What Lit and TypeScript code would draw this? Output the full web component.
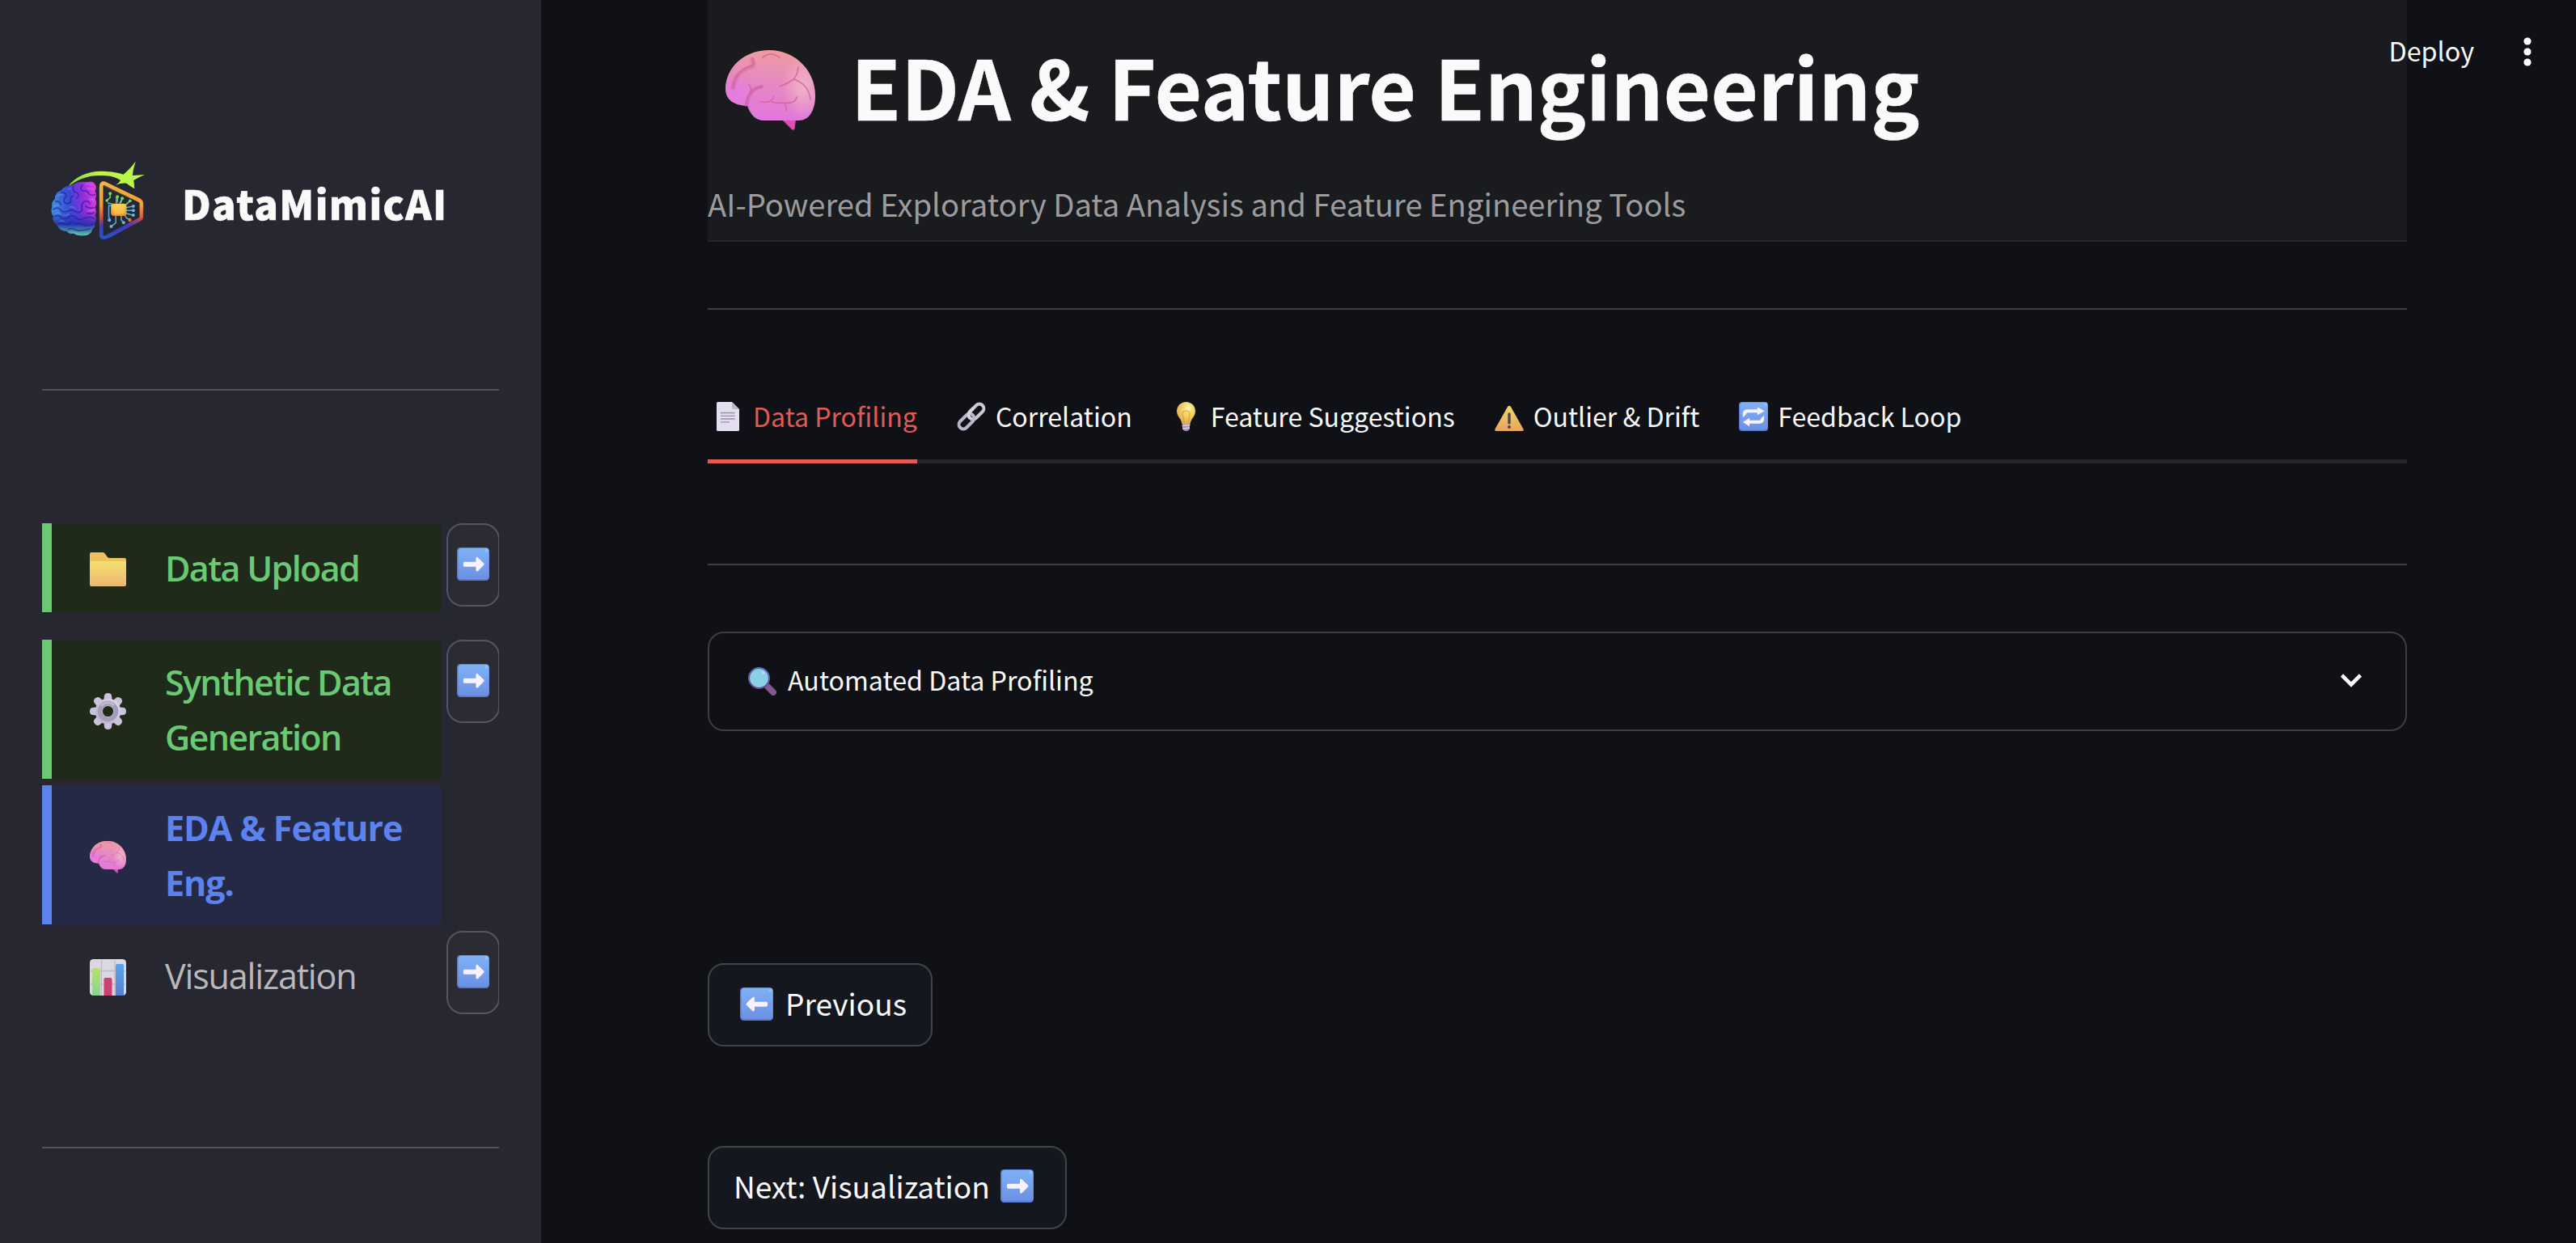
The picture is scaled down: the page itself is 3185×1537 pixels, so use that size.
import { LitElement, html, svg, css, nothing, TemplateResult } from "lit";
import { customElement, property } from "lit/decorators.js";
import { classMap } from "lit/directives/class-map.js";

/* ---------- glyph drawings ---------- */

const folder = svg`<svg viewBox="0 0 45 42" width="45" height="42">
  <defs><linearGradient id="f" x1="0" y1="0" x2="0" y2="1"><stop offset="0" stop-color="#f5e16e"/><stop offset="1" stop-color="#ebb573"/></linearGradient></defs>
  <path d="M0 2Q0 0 2 0H16Q18 0 19 2L22 6Q23 7 25 7H43Q45 7 45 9V16H0Z" fill="#edc15c"/>
  <path d="M0 13Q0 11 2 11H43Q45 11 45 13V40Q45 42 43 42H2Q0 42 0 40Z" fill="url(#f)"/></svg>`;

const gearTeeth = [0, 45, 90, 135, 180, 225, 270, 315];
const gear = svg`<svg viewBox="0 0 45 45" width="45" height="45">
  <defs><linearGradient id="g" x1="1" y1="0" x2="0" y2="1"><stop offset="0" stop-color="#dfdbe8"/><stop offset="1" stop-color="#b9acd0"/></linearGradient></defs>
  <mask id="gm"><rect width="45" height="45" fill="#fff"/><circle cx="22.5" cy="22.5" r="6.6" fill="#000"/></mask>
  <g fill="url(#g)" mask="url(#gm)">
    ${gearTeeth.map((a) => svg`<path transform=${`rotate(${a} 22.5 22.5)`} d="M17 12L18 3Q18.600 0 22.5 0T27 3L28 12Z" fill="#cbc3dc"/>`)}
    <circle cx="22.5" cy="22.5" r="15.8"/>
    <circle cx="22.5" cy="22.5" r="10" fill="none" stroke="#a49db3" stroke-width="5.5"/>
    <path d="M14 16a11 11 0 0 1 16-1" fill="none" stroke="#c3bccd" stroke-width="2.5"/>
  </g></svg>`;

const brain = (w: number, h: number) => svg`<svg viewBox="0 0 111 100" width=${w} height=${h}>
  <defs>
    <linearGradient id="b" x1=".55" y1="0" x2=".42" y2="1"><stop offset="0" stop-color="#ee9d9f"/><stop offset=".42" stop-color="#e68bc0"/><stop offset="1" stop-color="#e175e0"/></linearGradient>
    <radialGradient id="bh" cx=".5" cy=".5" r=".5"><stop offset="0" stop-color="#f0b3c8"/><stop offset="1" stop-color="#f0b3c8" stop-opacity="0"/></radialGradient>
    <radialGradient id="bl" cx=".5" cy=".5" r=".5"><stop offset="0" stop-color="#e57be6"/><stop offset="1" stop-color="#e57be6" stop-opacity="0"/></radialGradient>
    <clipPath id="bc"><path d="M0 48C1 22 23 1 54 1C88 1 111 28 111 57C111 76 103 88 91 88H48C36 88 31 80 27 70C12 69 0 64 0 48Z"/></clipPath>
  </defs>
  <path d="M69 86H87L85.500 98Q84.500 101 82 99Z" fill="#e04db6"/>
  <g clip-path="url(#bc)">
    <rect width="111" height="90" fill="url(#b)"/>
    <ellipse cx="96" cy="46" rx="26" ry="40" fill="url(#bh)"/>
    <ellipse cx="14" cy="52" rx="22" ry="22" fill="url(#bl)"/>
    <path d="M32 11Q38 19 31 22C18 26 10 36 9 50" fill="none" stroke="#c2578f" stroke-opacity=".3" stroke-width="6"/>
    <path d="M46 46C33 47 27 58 26 72" fill="none" stroke="#b24fae" stroke-opacity=".35" stroke-width="5"/>
  </g>
  <g fill="none" stroke="#da6295" stroke-width="1.7" stroke-opacity=".85" stroke-linecap="round">
    <path d="M46 10Q56 2 67 10"/><path d="M33 11Q37 19 31 21C17 25 10 36 9 49"/>
    <path d="M90 22Q89 32 84 37Q76 43 67 46M84 37Q103 43 105 62"/>
    <path d="M29 44Q33 48 30 54M46 46C33 47 26 58 25 70"/>
    <path d="M44 65Q57 67 60 58M57 65Q64 67 72 66Q86 68 88 59M72 66Q76 70 75 76"/>
  </g></svg>`;

const chart = svg`<svg viewBox="0 0 45 45" width="45" height="45">
  <defs>
    <linearGradient id="cg" x1="0" y1="0" x2="0" y2="1"><stop offset="0" stop-color="#b7e069"/><stop offset="1" stop-color="#86d691"/></linearGradient>
    <linearGradient id="cb" x1="0" y1="0" x2="0" y2="1"><stop offset="0" stop-color="#5aa5ef"/><stop offset="1" stop-color="#577fce"/></linearGradient>
  </defs>
  <rect width="45" height="45" rx="4.500" fill="#dcd8e3"/>
  <path d="M14.500 1V44M31 1V44M1 14.500H44M1 31H44" stroke="#bdb8c8" stroke-width="1.300"/>
  <path d="M3 45V13Q3 11 5 11H11Q13 11 13 13V45Z" fill="url(#cg)"/>
  <path d="M17.500 45V25Q17.500 23 19.500 23H25.500Q27.500 23 27.500 25V45Z" fill="#cd3f70"/>
  <path d="M32 45V8Q32 6 34 6H40Q42 6 42 8V45Z" fill="url(#cb)"/></svg>`;

const keycap = (id: string, body: TemplateResult) => svg`
  <defs><linearGradient id=${id} x1="0" y1="0" x2="0" y2="1"><stop offset="0" stop-color="#7fb2f6"/><stop offset="1" stop-color="#6c90e3"/></linearGradient></defs>
  <rect width="41" height="41" rx="4.500" fill="#5b78d3"/>
  <rect x="1.500" y=".7" width="39" height="38.600" rx="4" fill=${`url(#${id})`}/>
  <circle cx="37.500" cy="3.500" r="2.200" fill="#8fc6fb" opacity=".8"/>
  <g fill="#f9f2fd">${body}</g>`;

const arrow = (dir: "left" | "right", w = 41) => svg`<svg viewBox="0 0 41 41" width=${w} height="41" preserveAspectRatio="none">
  ${keycap("k", svg`<path transform=${dir === "left" ? "translate(42 0) scale(-1 1)" : ""}
    d="M9.500 17.700H24V13Q24.500 11 26.500 12.200L34 19.600Q35 20.700 34 21.800L26.500 29.200Q24.500 30.300 24 28.300V23.700H9.500Q8 23.700 8 22V19.400Q8 17.700 9.500 17.700Z"/>`)}</svg>`;

const doc = svg`<svg viewBox="0 0 36 36" width="36" height="36">
  <path d="M4.500 0H22L31 9V34.500Q31 36 29.500 36H4.500Q3 36 3 34.500V1.500Q3 0 4.500 0Z" fill="#e4dff0"/>
  <path d="M22 0L31 9H23.500Q22 9 22 7.500Z" fill="#bdb7ca"/>
  <path d="M8 13.500H25.500M8 17.300H25.500M8 21H25.500M8 24.800H19" stroke="#96909f" stroke-width="1.300"/></svg>`;

const link = svg`<svg viewBox="0 0 36 36" width="36" height="36" fill="none">
  <g transform="rotate(45 18 18)">
    <rect x="12.500" y="-1.500" width="11" height="22" rx="5.500" stroke="#cdc6d6" stroke-width="4"/>
    <rect x="12.500" y="15.500" width="11" height="22" rx="5.500" stroke="#bdb4c9" stroke-width="4"/>
    <path d="M12.500 9V15A5.500 5.500 0 0 0 18 20.500" stroke="#d9d3e0" stroke-width="4"/>
  </g></svg>`;

const bulb = svg`<svg viewBox="0 0 36 36" width="36" height="36">
  <defs><radialGradient id="l" cx=".62" cy=".28" r=".7"><stop offset="0" stop-color="#fff6c4"/><stop offset=".35" stop-color="#f6dc6c"/><stop offset="1" stop-color="#e9ab4e"/></radialGradient></defs>
  <path d="M13 26H22V33Q21 36 17.500 36T13 33Z" fill="#a492b8"/>
  <path d="M12.500 29.500L22.500 28.500M13 33L22 32" stroke="#d9cfe2" stroke-width="1.300"/>
  <path d="M17.500 0C24 0 29 5 29 11.500C29 18 23.500 20 22.500 27.500H12.500C11.500 20 6 18 6 11.500C6 5 11 0 17.500 0Z" fill="url(#l)"/>
  <path d="M15.500 27L13 15Q13 11 17.500 11T22 15L19.500 27" fill="none" stroke="#dfa040" stroke-width="1.200"/></svg>`;

const warning = svg`<svg viewBox="0 0 36 36" width="36" height="36">
  <defs><linearGradient id="w" x1="0" y1="0" x2="0" y2="1"><stop offset="0" stop-color="#f1d66c"/><stop offset="1" stop-color="#e9a45f"/></linearGradient></defs>
  <path d="M16 6Q18 3.500 20 6L35.500 33.500Q36.500 36 34 36H2Q-.5 36 .5 33.500Z" fill="url(#w)"/>
  <path d="M18 15V26" stroke="#4d4652" stroke-width="3.400" stroke-linecap="round"/><circle cx="18" cy="31" r="2" fill="#4d4652"/></svg>`;

const loop = svg`<svg viewBox="0 0 41 41" width="36" height="36">
  ${keycap("o", svg`<path d="M5.500 22V17Q5.500 10.500 12 10.500H26V7L36 12.800L26 18.500V15H12.500Q10 15 10 18Z"/><path d="M35.500 19V24Q35.500 30.500 29 30.500H15V34.500L5.500 28.500L15 22.500V26H28.500Q31 26 31 23Z"/>`)}</svg>`;

const magnifier = svg`<svg viewBox="0 0 35 35" width="35" height="35">
  <defs><linearGradient id="m" x1="0" y1="0" x2="0" y2="1"><stop offset="0" stop-color="#4c70b8"/><stop offset="1" stop-color="#6b4b8e"/></linearGradient></defs>
  <path d="M24.500 24.500L31 31" stroke="#85578f" stroke-width="8" stroke-linecap="round"/>
  <circle cx="13.500" cy="13.500" r="12.500" fill="#8ccde8" stroke="url(#m)" stroke-width="2.200"/>
  <circle cx="18.500" cy="7" r="2" fill="#c3d6f1"/></svg>`;

const logo = svg`<svg viewBox="42 28 347 291" width="116" height="97">
  <defs>
    <linearGradient id="lb" x1="0" y1=".45" x2="1" y2=".3"><stop offset="0" stop-color="#3e93dd"/><stop offset=".4" stop-color="#3a48d8"/><stop offset=".7" stop-color="#8b2fdc"/><stop offset="1" stop-color="#e03ae0"/></linearGradient>
    <linearGradient id="lf" x1="0" y1="0" x2="0" y2="1"><stop offset=".55" stop-color="#2a2fc0" stop-opacity="0"/><stop offset=".78" stop-color="#232fae" stop-opacity=".85"/><stop offset="1" stop-color="#55cfa0"/></linearGradient>
    <linearGradient id="lp" x1="0" y1="0" x2="0" y2="1"><stop offset="0" stop-color="#f2b443"/><stop offset=".4" stop-color="#ef9a34"/><stop offset=".62" stop-color="#dc4e34"/><stop offset=".78" stop-color="#4638b8"/><stop offset="1" stop-color="#2c50d2"/></linearGradient>
    <linearGradient id="lc" x1="0" y1="0" x2="0" y2="1"><stop offset="0" stop-color="#f8cf4c"/><stop offset="1" stop-color="#e88d30"/></linearGradient>
    <linearGradient id="la" x1="0" y1="0" x2="1" y2="0"><stop offset="0" stop-color="#7fd63c"/><stop offset=".4" stop-color="#c3f24c"/><stop offset="1" stop-color="#b4fa4a"/></linearGradient>
  </defs>
  <path d="M104 124C135 80 190 62 245 67Q290 70 310 78Q336 58 356 29Q346 58 344 82Q365 81 389 79Q366 89 348 100Q351 116 351 131Q336 122 322 111Q300 109 281 118Q294 110 300 100Q278 85 245 83C190 78 150 90 104 124Z" fill="url(#la)"/>
  <g>
    <path d="M176 106Q200 100 207 118Q212 128 205 140Q213 154 206 168Q214 186 205 200Q213 216 205 230Q213 246 203 258Q207 272 196 280Q190 304 164 305Q140 306 126 297Q108 300 100 288Q72 288 64 264Q46 252 50 234Q38 216 46 198Q42 180 56 170Q56 144 78 138Q94 118 120 118Q140 102 176 106Z" fill="url(#lb)"/>
    <path d="M176 106Q200 100 207 118Q212 128 205 140Q213 154 206 168Q214 186 205 200Q213 216 205 230Q213 246 203 258Q207 272 196 280Q190 304 164 305Q140 306 126 297Q108 300 100 288Q72 288 64 264Q46 252 50 234Q38 216 46 198Q42 180 56 170Q56 144 78 138Q94 118 120 118Q140 102 176 106Z" fill="url(#lf)"/>
  </g>
  <g fill="none" stroke="#1c1c86" stroke-opacity=".6" stroke-width="5" stroke-linecap="round">
    <path d="M125 124Q120 142 138 146Q150 154 138 166M158 118Q146 132 160 140Q178 136 182 150Q196 160 205 152"/>
    <path d="M80 144Q98 144 98 160Q84 172 94 184Q108 190 116 178Q112 160 124 158"/>
    <path d="M58 178Q74 176 78 190M50 208Q66 196 76 208Q86 222 104 214Q122 206 134 216Q148 224 158 210Q150 190 164 180Q180 172 186 186"/>
    <path d="M54 234Q72 226 82 240Q98 246 108 236Q124 226 136 240Q150 250 166 240Q186 232 202 242M68 262Q84 254 96 264Q112 266 116 254M130 262Q150 256 160 266Q178 272 198 262M106 282Q120 274 132 284Q152 290 186 280M170 196Q184 206 202 202M176 222Q190 226 202 220"/>
  </g>
  <g fill="none" stroke="#9ec4ff" stroke-opacity=".35" stroke-width="3.500" stroke-linecap="round">
    <path d="M66 158Q74 150 86 154M54 196Q62 188 70 194M58 224Q70 216 78 226M74 252Q84 246 92 254M104 134Q108 128 116 132M108 200Q120 194 130 204M90 230Q104 230 108 224M112 290Q130 292 140 298"/>
    <path d="M170 114Q184 110 196 118M176 130Q190 128 198 136M184 170Q196 168 200 176M180 212Q192 214 200 208" stroke="#ffa8ff"/>
  </g>
  <path d="M228 122Q228 108 242 112L370 174Q377 178 377 186V234Q377 241 371 245L250 309Q228 318 228 300Z" fill="none" stroke="url(#lp)" stroke-width="14" stroke-linejoin="round"/>
  <path d="M232 118L376 184V238" fill="none" stroke="#ffd879" stroke-opacity=".3" stroke-width="3"/>
  <g fill="none" stroke="#5ab0df" stroke-width="4.500">
    <path d="M266 194H256V238L262 246M282 232V258L266 270M302 230V246L310 256M315 228L322 240L334 246M320 222L346 230M320 212H346M320 201L346 196M284 186V162M296 186L306 168M270 188L254 184V188"/>
    <path d="M261 150V164L249 174M288 162V182M306 168L300 184M334 177L318 192" stroke="#6ed08c"/>
  </g>
  <g fill="#6fdc55"><circle cx="261" cy="149" r="6"/><circle cx="249" cy="175" r="5.500"/><circle cx="288" cy="161" r="6"/><circle cx="306" cy="167" r="6"/><circle cx="335" cy="176" r="5.500"/></g>
  <g fill="#63b8ec"><circle cx="258" cy="248" r="6"/><circle cx="265" cy="271" r="6"/><circle cx="311" cy="257" r="6"/><circle cx="347" cy="229" r="6"/><circle cx="347" cy="212" r="6"/><circle cx="347" cy="196" r="6"/></g>
  <circle cx="334" cy="247" r="6.500" fill="#e8742e"/>
  <rect x="264" y="186" width="58" height="46" rx="12" fill="url(#lc)"/>
  <rect x="272" y="192" width="42" height="33" rx="7" fill="#fbd75c" opacity=".55"/></svg>`;

/* ---------- shared ---------- */

const face = css`
  :host { font-family: "Noto Sans CJK SC", "Source Sans 3", sans-serif; }
  * { box-sizing: border-box; }
  svg { display: block; flex: none; }
`;

/* ---------- sidebar step ---------- */

@customElement("nav-step")
class NavStep extends LitElement {
  @property() label = "";
  @property() status = "todo";
  @property({ attribute: false }) icon: unknown = nothing;

  static styles = [face, css`
    :host { display: flex; align-items: flex-start; gap: 6px; }
    .card { width: 494px; min-height: 110px; display: flex; align-items: center; padding: 19px 0 17px; border-left: 12px solid transparent; color: #b9b9ba;
      font: 400 43px/68px "Open Sans", "Segoe UI", sans-serif; letter-spacing: -1.15px; }
    .card.done { background: #1f2a1b; border-color: #6bc974; color: #6bc974; font-weight: 600; letter-spacing: -1.65px; }
    .card.active { background: #242946; border-color: #5b82ee; color: #5b82ee; font-weight: 700; letter-spacing: -1.05px; }
    .icon { width: 45px; margin: 2px 48px 0 47px; flex: none; }
    .text { width: 310px; }
    .clip { width: 65px; overflow: hidden; flex: none; }
    .go { width: 66px; height: 103px; border: 2px solid #54555e; border-radius: 20px; background: #2b2b34; display: flex; align-items: center; justify-content: center; padding-bottom: 2px; }
  `];

  render() {
    return html`<div class=${classMap({ card: true, [this.status]: true })}>
        <div class="icon">${this.icon}</div><div class="text">${this.label}</div>
      </div>
      ${this.status === "active" ? nothing : html`<div class="clip"><div class="go">${arrow("right", 40)}</div></div>`}`;
  }
}

/* ---------- page ---------- */

const tabs: { label: string; icon: unknown }[] = [
  { label: "Data Profiling", icon: doc },
  { label: "Correlation", icon: link },
  { label: "Feature Suggestions", icon: bulb },
  { label: "Outlier & Drift", icon: warning },
  { label: "Feedback Loop", icon: loop },
];

@customElement("app-root")
class AppRoot extends LitElement {
  static styles = [face, css`
    :host { display: flex; position: relative; width: 100%; height: 1537px; overflow: hidden; background: #0f1116; color: #fafafa; }
    .side { width: 669px; flex: none; height: 100%; background: #262730; padding: 0 52px; }
    .brand { display: flex; align-items: center; height: 97px; margin: 199px 0 185px; padding-left: 11px; gap: 46px; }
    .name { font-size: 49px; font-weight: 900; line-height: 60px; letter-spacing: 1.4px; margin-top: 6px; -webkit-text-stroke: .6px #fafafa; }
    .rule { height: 2px; background: #505159; width: 565px; }
    .steps { display: flex; flex-direction: column; gap: 8px; margin: 164px 0 157px; }
    .first { margin-bottom: 26px; }

    .main { width: 2101px; margin-left: 206px; flex: none; }
    .head { height: 299px; background: #1a1b1f; border-bottom: 2px solid #242529; padding-top: 45px; }
    .title { display: flex; align-items: center; gap: 44px; height: 120px; padding-left: 22px; }
    .title svg { margin-top: 12px; }
    h1 { margin: 0; font-size: 101px; line-height: 120px; font-weight: 700; white-space: nowrap; -webkit-text-stroke: .6px #fafafa; }
    .sub { margin-top: 62px; font-size: 38.2px; line-height: 50px; color: #9c9c9e; }
    .line { height: 2px; background: #3e3f43; }
    .l1 { margin-top: 82px; }
    .tabs { display: flex; gap: 41px; margin-top: 106px; height: 84px; box-shadow: inset 0 -5px #26272b; font-size: 32.1px; line-height: 50px; }
    .tab { display: flex; height: 84px; white-space: nowrap; }
    .tab svg { margin: 8px 12px 0 8px; }
    .tab.on { color: #e15b54; border-bottom: 5px solid #e25a53; }
    .l2 { margin-top: 124px; }
    .expander { margin-top: 82px; height: 123px; border: 2px solid #3d3e42; border-radius: 20px; display: flex; align-items: center; padding: 0 54px 0 48px; font-size: 32.2px; line-height: 50px; }
    .expander span { flex: 1; margin: -5px 0 0 14px; }
    .expander svg:last-child { margin-top: -3px; }
    .btn { display: flex; align-items: center; height: 103px; border: 2px solid #424347; border-radius: 20px; background: #14171e; font-size: 37.1px; line-height: 50px; white-space: nowrap; }
    .btn span { margin-top: -5px; }
    .btn svg { margin-top: -2px; }
    .prev { width: 278px; margin-top: 287px; padding-left: 38px; gap: 15px; }
    .next { width: 444px; margin-top: 123px; padding: 0 39px 0 30px; justify-content: space-between; }
    .next span { margin-top: -6px; }
    .next svg { margin-top: -4px; }

    .toolbar { position: absolute; top: 37px; right: 55px; display: flex; align-items: center; height: 50px; font-size: 32.3px; line-height: 50px; gap: 61px; }
    .toolbar svg { margin-top: 4px; }
  `];

  render() {
    return html`
      <div class="side">
        <div class="brand">${logo}<div class="name">DataMimicAI</div></div>
        <div class="rule"></div>
        <div class="steps">
          <nav-step class="first" label="Data Upload" status="done" .icon=${folder}></nav-step>
          <nav-step label="Synthetic Data Generation" status="done" .icon=${gear}></nav-step>
          <nav-step label="EDA & Feature Eng." status="active" .icon=${brain(45, 41)}></nav-step>
          <nav-step label="Visualization" .icon=${chart}></nav-step>
        </div>
        <div class="rule"></div>
      </div>
      <div class="main">
        <div class="head">
          <div class="title">${brain(111, 100)}<h1>EDA &amp; Feature Engineering</h1></div>
          <div class="sub">AI-Powered Exploratory Data Analysis and Feature Engineering Tools</div>
        </div>
        <div class="line l1"></div>
        <div class="tabs">
          ${tabs.map((t, i) => html`<div class=${classMap({ tab: true, on: i === 0 })}>${t.icon}<span>${t.label}</span></div>`)}
        </div>
        <div class="line l2"></div>
        <div class="expander">${magnifier}<span>Automated Data Profiling</span>
          <svg viewBox="0 0 26 17" width="26" height="17"><path d="M1.500 2L13 13.500L24.500 2" fill="none" stroke="#fff" stroke-width="4.600"/></svg>
        </div>
        <div class="btn prev">${arrow("left")}<span>Previous</span></div>
        <div class="btn next"><span>Next: Visualization</span>${arrow("right")}</div>
      </div>
      <div class="toolbar"><span>Deploy</span>
        <svg viewBox="0 0 10 36" width="10" height="36" fill="#fff"><circle cx="5" cy="5" r="4.600"/><circle cx="5" cy="18" r="4.600"/><circle cx="5" cy="31" r="4.600"/></svg>
      </div>`;
  }
}
